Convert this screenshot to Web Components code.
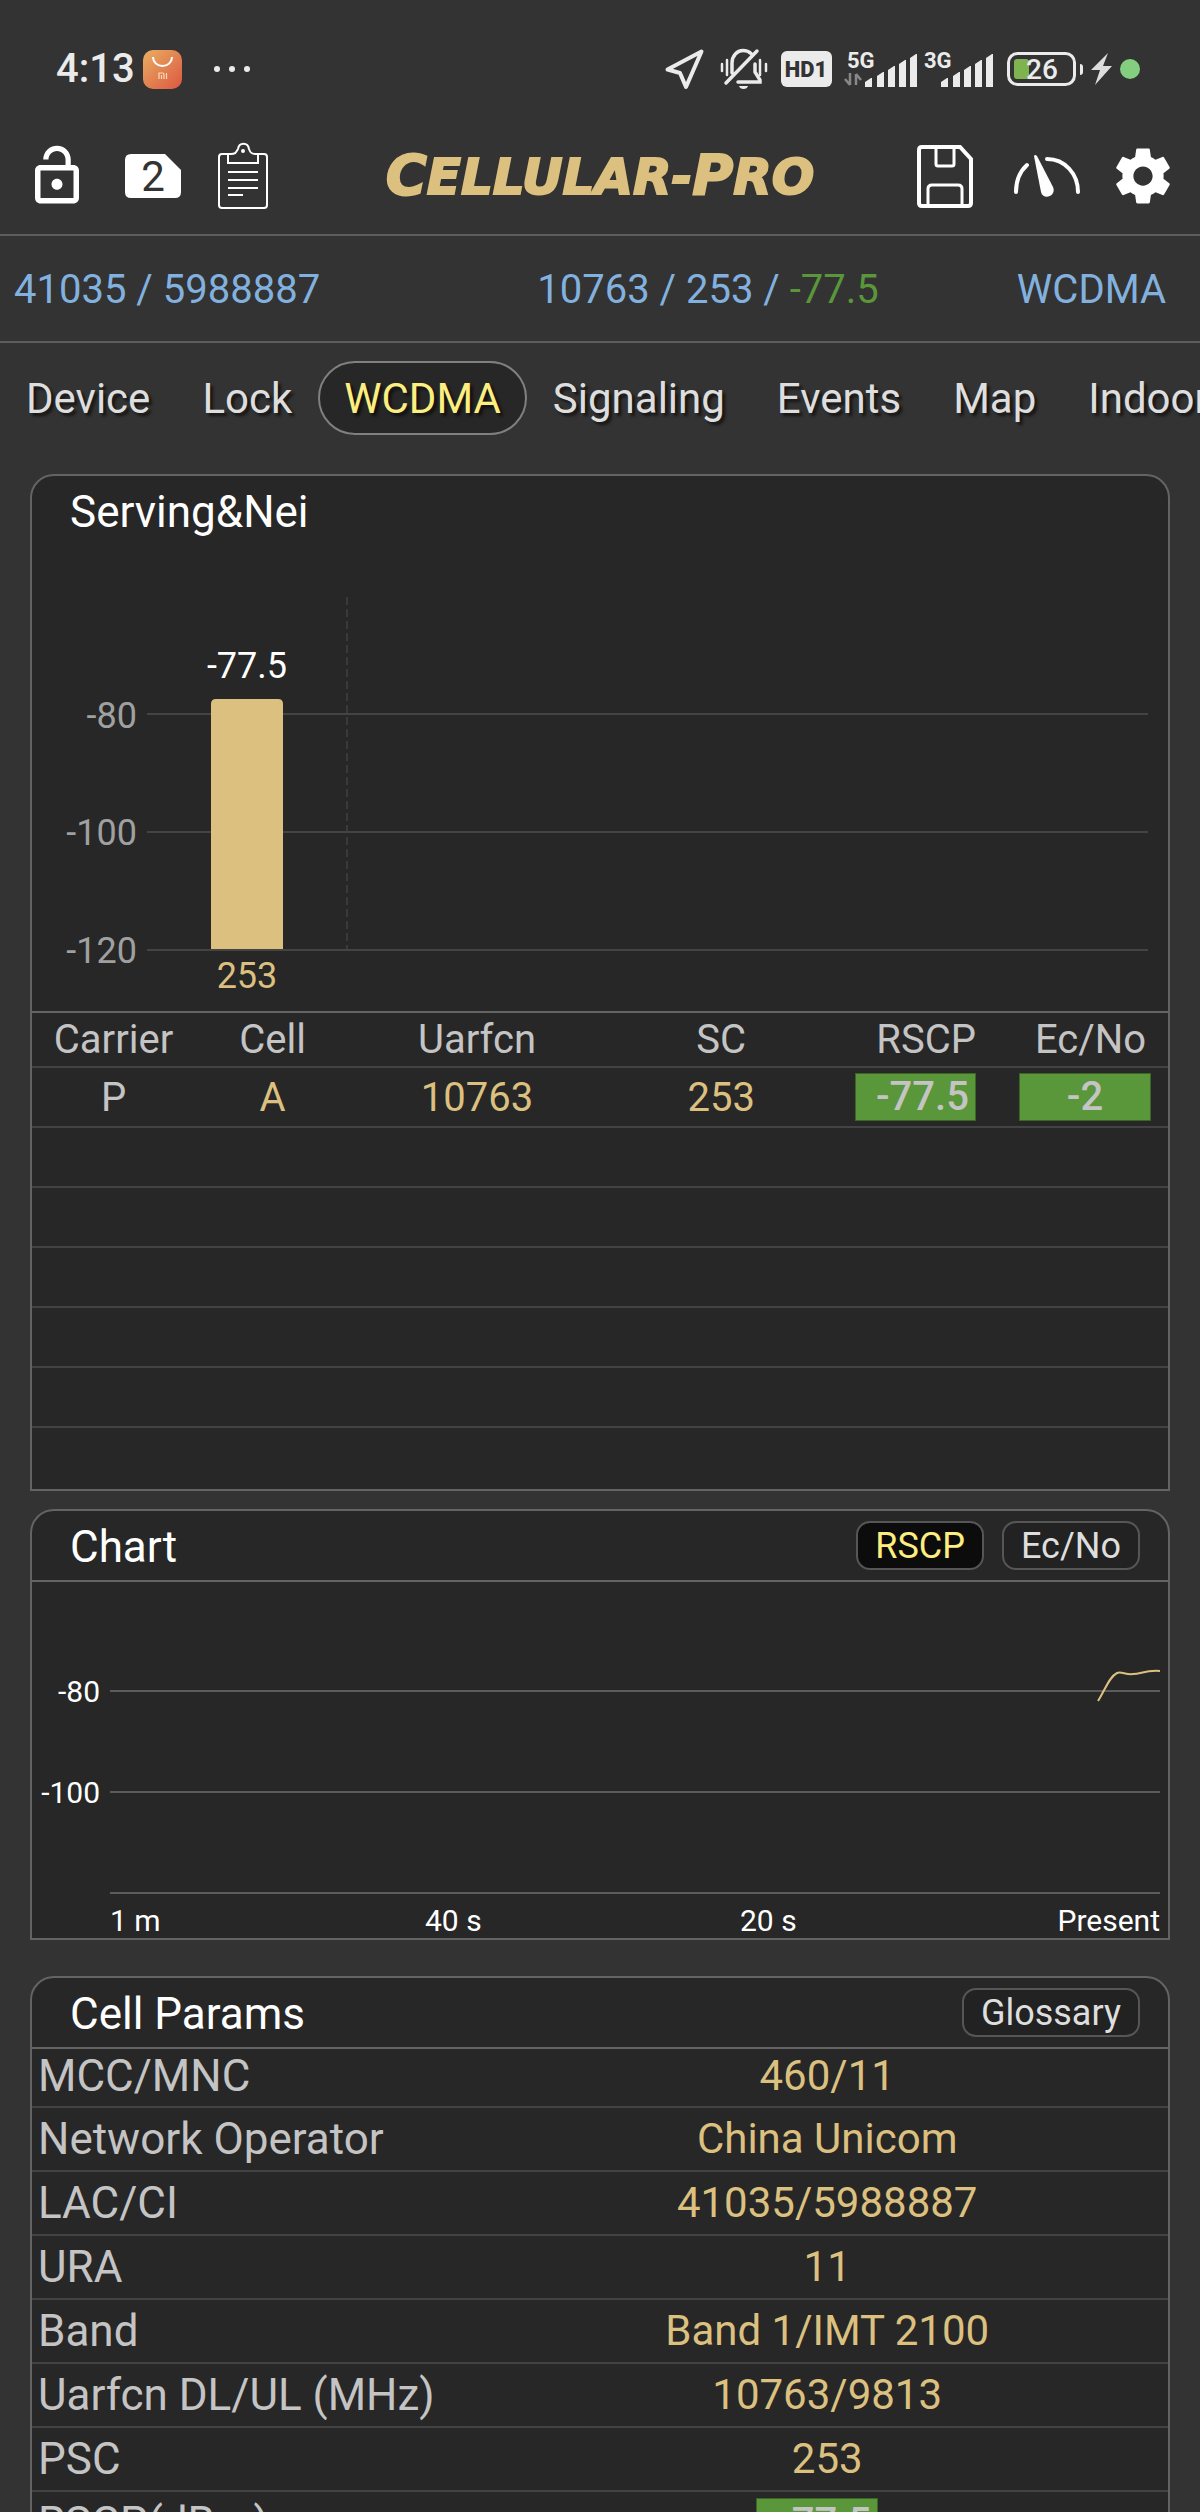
<!DOCTYPE html>
<html lang="en">
<head>
<meta charset="utf-8">
<meta name="viewport" content="width=device-width">
<title>Cellular-Pro</title>
<style>
:root{--bg:#333;--panel:#272727;--edge:#646464;--rule:#434343;--gold:#dcc07f;--blue:#82b1df;--green:#5a963a;--grey:#c4c4c4;--yellow:#fdee7f;--text:#dedede}
html,body{margin:0;height:100%;background:var(--bg)}
body{font-family:Roboto,"Liberation Sans",sans-serif;color:var(--text)}
</style>
</head>
<body>
<cell-app></cell-app>
<script>
class View extends HTMLElement{
  connectedCallback(){
    if(!this.shadowRoot)this.attachShadow({mode:'open'}).innerHTML='<style>*{box-sizing:border-box}button{font:inherit;color:inherit;background:none;border:0;padding:0;margin:0}svg{display:block;overflow:visible}'+this.css()+'</style>'+this.html();
  }
}

customElements.define('status-bar',class extends View{
  css(){return `:host{display:flex;justify-content:space-between;align-items:center;height:118px;padding:20px 60px 0 56px;color:#ebebeb}
    div{display:flex;align-items:center;gap:8px}
    time{font-size:40px;font-weight:500;line-height:48px}
    text{font-family:Roboto,sans-serif;fill:#ebebeb}`}
  bars(){return [[0,26],[12,20],[23,14],[34,8],[45,2]].map(([x,y])=>`<path d="M${x+21} 35V${y+4}l6-4h1V35z"/>`).join('')}
  html(){return `
  <div><time>4:13</time>
    <svg width="39" height="39" viewBox="0 0 39 39" role="img" aria-label="Mi Store"><defs><linearGradient id="g" x1="0" y1="0" x2="1" y2="1"><stop offset="0" stop-color="#e9af62"/><stop offset="1" stop-color="#db5741"/></linearGradient></defs><rect width="39" height="39" rx="10" fill="url(#g)"/><path d="M10 7c0 5 4 9 9.500 9s9.500-4 9.500-9" fill="none" stroke="#fff" stroke-width="2"/><path d="M16 29v-6h3.500q1.500 0 1.500 1.500V29M18.500 25v4M23.500 23v6" fill="none" stroke="#fbd9b5" stroke-width="1.200"/></svg>
    <svg width="66" height="38" viewBox="0 0 66 38" fill="#ebebeb" aria-hidden="true"><circle cx="27" cy="19" r="3"/><circle cx="42" cy="19" r="3"/><circle cx="57" cy="19" r="3"/></svg>
  </div>
  <div>
    <svg width="47" height="40" viewBox="0 0 47 40" aria-hidden="true"><path d="M36.500 2.500 2.500 20.500 15 24l6 14z" fill="none" stroke="#ebebeb" stroke-width="4" stroke-linejoin="round"/></svg>
    <svg width="53" height="40" viewBox="0 0 53 40" fill="none" stroke="#ebebeb" stroke-width="3" stroke-linecap="round" aria-hidden="true"><path d="M12 24V14C12 7 17 1.500 23 1.500q5 0 8 3M35 15v8l5 8v2H18M6 34 37 2" stroke-width="3.500"/><path d="M7 11v15M2 15v7M40 11v15M46 15v7" stroke-width="2.500"/><path d="M19 37h9q-1 3-4.500 3T19 37z" fill="#ebebeb" stroke="none"/></svg>
    <svg width="55" height="36" viewBox="0 0 55 36" aria-label="HD1"><rect width="51" height="36" rx="6" fill="#ebebeb"/><text x="25" y="26" text-anchor="middle" font-size="22" font-weight="900" style="fill:#333">HD1</text></svg>
    <svg width="72" height="35" viewBox="0 0 72 35" fill="#ebebeb"><text x="3" y="16" font-size="22" font-weight="700">5G</text><path d="M6 21v12M6 33l-5-6M12 33V22M12 22l5 6" stroke="#888" stroke-width="2.500" fill="none"/>${this.bars()}</svg>
    <svg width="75" height="35" viewBox="0 0 75 35" fill="#ebebeb"><text x="0" y="16" font-size="22" font-weight="700">3G</text><g transform="translate(-4)">${this.bars()}</g></svg>
    <svg width="76" height="34" viewBox="0 0 76 34"><rect x="1.500" y="1.500" width="66" height="31" rx="9" fill="none" stroke="#ebebeb" stroke-width="3"/><path d="M73 12q3 0 3 3v5q0 3-3 3z" fill="#ebebeb"/><rect x="7" y="7" width="15" height="20" rx="3" fill="#7fb350"/><text x="35" y="27" text-anchor="middle" font-size="28" font-weight="500">26</text></svg>
    <svg width="21" height="32" viewBox="0 0 21 32" fill="#ddd" aria-hidden="true"><path d="M17 0 0 17h9L4 32 21 13h-9z"/></svg>
    <svg width="20" height="20" viewBox="0 0 20 20" aria-hidden="true"><circle cx="10" cy="10" r="10" fill="#84cf7f"/></svg>
  </div>`}
});

customElements.define('tool-bar',class extends View{
  css(){return `:host{display:grid;grid-template-columns:1fr auto 1fr;align-items:center;height:118px;padding:0 24px;border-bottom:2px solid #5c5e5e}
    div{display:flex;gap:27px}.r{justify-content:flex-end;gap:33px}
    h1{margin:0;color:var(--gold);font:italic 700 50px/56px "DejaVu Sans",sans-serif;text-transform:uppercase;-webkit-text-stroke:2px var(--gold)}
    h1 span{font-size:56px}`}
  html(){return `
  <div>
    <button aria-label="Unlock"><svg width="66" height="66" viewBox="0 0 24 24" fill="#fff"><path d="M12 17c1.100 0 2-.9 2-2s-.9-2-2-2-2 .9-2 2 .9 2 2 2zm6-9h-1V6c0-2.760-2.240-5-5-5S7 3.240 7 6h1.900c0-1.710 1.390-3.100 3.100-3.100 1.710 0 3.100 1.390 3.100 3.100v2H6c-1.100 0-2 .9-2 2v10c0 1.100.9 2 2 2h12c1.100 0 2-.9 2-2V10c0-1.100-.9-2-2-2zm0 12H6V10h12v10z"/></svg></button>
    <button aria-label="SIM"><svg width="66" height="66" viewBox="0 0 66 66"><path d="M14 11h34l16 16v22q0 6-6 6H14q-6 0-6-6V17q0-6 6-6z" fill="#fff"/><text x="36" y="48" text-anchor="middle" font-size="42" font-family="Roboto,sans-serif" fill="#333">2</text></svg></button>
    <button aria-label="Clipboard"><svg width="66" height="66" viewBox="0 0 66 66" fill="none" stroke="#fff" stroke-width="2"><path d="M18 11h-6q-3 0-3 3v48q0 3 3 3h42q3 0 3-3V14q0-3-3-3h-6"/><path d="M18 20v-9h3c5 0 5-2 7-5 1-7 10-7 11 0 1 3 2 5 6 5h3v9z"/><circle cx="33" cy="8" r="1"/><path d="M18 29h30M18 37h30M18 45h30M18 52h15"/></svg></button>
  </div>
  <h1><span>C</span>ellular-<span>P</span>ro</h1>
  <div class="r">
    <button aria-label="Save"><svg width="66" height="66" viewBox="0 0 66 66" fill="none" stroke="#fff" stroke-width="4"><path d="M10 4h38l11 12v44q0 3-3 3H10q-3 0-3-3V7q0-3 3-3z"/><path d="M24 4v17q0 2 2 2h14q2 0 2-2V4M16 63V46q0-4 4-4h26q4 0 4 4v17" stroke-width="3"/></svg></button>
    <button aria-label="Gauge"><svg width="66" height="66" viewBox="0 0 66 66"><path d="M5 49q0-17 11-27M36 16c18 0 31 15 31 33" fill="none" stroke="#fff" stroke-width="4" stroke-linecap="round"/><path d="M23 13q1-2 3 0l16 31c4 9-10 14-12 5z" fill="#fff"/></svg></button>
    <button aria-label="Settings"><svg width="66" height="66" viewBox="0 0 24 24" fill="#fff"><path d="M19.430 12.980c.04-.32.07-.64.07-.98s-.03-.66-.07-.98l2.110-1.650c.19-.15.24-.42.12-.64l-2-3.460c-.12-.22-.39-.3-.61-.22l-2.490 1c-.52-.4-1.080-.73-1.690-.98l-.38-2.650C14.460 2.180 14.250 2 14 2h-4c-.25 0-.46.18-.49.42l-.38 2.650c-.61.25-1.170.59-1.690.98l-2.490-1c-.23-.09-.49 0-.61.22l-2 3.460c-.13.22-.07.49.12.64l2.110 1.650c-.04.32-.07.65-.07.98s.03.66.07.98l-2.110 1.650c-.19.15-.24.42-.12.64l2 3.460c.12.22.39.3.61.22l2.490-1c.52.4 1.080.73 1.690.98l.38 2.650c.03.24.24.42.49.42h4c.25 0 .46-.18.49-.42l.38-2.650c.61-.25 1.170-.59 1.690-.98l2.490 1c.23.09.49 0 .61-.22l2-3.460c.12-.22.07-.49-.12-.64l-2.110-1.650zM12 15.500c-1.930 0-3.500-1.570-3.500-3.500s1.570-3.500 3.500-3.500 3.500 1.570 3.500 3.500-1.570 3.500-3.500 3.500z"/></svg></button>
  </div>`}
});

customElements.define('cell-strip',class extends View{
  css(){return `:host{display:grid;grid-template-columns:39fr 40fr 21fr;align-items:center;height:107px;padding-top:2px;border-bottom:2px solid #5c5e5e;box-sizing:border-box;color:var(--blue);font-size:40px;line-height:48px;white-space:nowrap}
    .a{padding-left:14px}.b{text-align:center}.c{text-align:right;padding-right:34px}b{font-weight:400;color:var(--green)}`}
  html(){return `<span class="a">41035 / 5988887</span><span class="b">10763 / 253 / <b>-77.5</b></span><span class="c">WCDMA</span>`}
});

customElements.define('tab-bar',class extends View{
  css(){return `:host{display:block;overflow:hidden;padding:18px 0 39px}
    nav{display:flex;width:max-content;font-size:42px}
    button{height:74px;padding:2px 24px 0;border:2px solid transparent;border-radius:37px;line-height:48px;text-shadow:3px 3px 3px rgba(0,0,0,.6)}
    button[aria-selected=true]{background:var(--panel);border-color:#808080;color:var(--yellow)}`}
  html(){return `<nav role="tablist">${['Device','Lock','WCDMA','Signaling','Events','Map','Indoor'].map(t=>`<button role="tab" aria-selected="${t=='WCDMA'}">${t}</button>`).join('')}</nav>`}
});

customElements.define('info-panel',class extends View{
  css(){return `:host{display:block;background:var(--panel);border:2px solid var(--edge);border-radius:24px 24px 0 0}
    header{display:flex;align-items:center;justify-content:space-between;height:71px;padding:0 28px 0 38px;border-bottom:2px solid var(--edge)}
    :host([plain]) header{height:72px;border-color:transparent}
    h2{margin:0;padding-top:2px;color:#fff;font-size:44px;line-height:48px;font-weight:400}
    div{display:flex;gap:18px}`}
  html(){return `<header><h2><slot name="title"></slot></h2><div><slot name="actions"></slot></div></header><slot></slot>`}
});

customElements.define('pill-button',class extends View{
  css(){return `:host{display:block}button{height:49px;padding:0 17px;border:2px solid #565656;border-radius:14px;background:#222;font-size:36px;line-height:40px;color:var(--text)}
    :host([on]) button{background:#0c0c0c;color:var(--yellow)}`}
  html(){return `<button aria-pressed="${this.hasAttribute('on')}"><slot></slot></button>`}
});

customElements.define('bar-chart',class extends View{
  css(){return `:host{display:flex;font-size:36px;padding-right:20px}.p{flex:1}`}
  html(){return `<svg width="115" height="463" fill="#a0a0a0" text-anchor="end"><text x="105" y="180">-80</text><text x="105" y="297">-100</text><text x="105" y="415">-120</text></svg>
  <svg class="p" width="100%" height="463" text-anchor="middle"><path d="M200 49v353" stroke="#3a3a3a" stroke-width="2" stroke-dasharray="8 4"/><g stroke="#444" stroke-width="2"><line x2="100%" y1="166" y2="166"/><line x2="100%" y1="284" y2="284"/><line x2="100%" y1="402" y2="402"/></g>
  <path d="M64 401V156q0-5 5-5h62q5 0 5 5V401z" fill="#dcc07f"/><text x="100" y="130" fill="#fff">-77.5</text><text x="100" y="440" fill="#dcc07f">253</text></svg>`}
});

customElements.define('neighbor-table',class extends View{
  css(){return `:host{display:block;border-top:2px solid var(--edge)}
    table{width:100%;table-layout:fixed;border-collapse:separate;border-spacing:0;font-size:40px;line-height:48px;color:var(--grey);text-align:center}
    th,td{height:60px;padding:0 0 0 4px;font-weight:400;border-bottom:2px solid var(--rule)}
    td{padding-top:2px}
    th{height:55px}tr:last-child td{height:61px;border:0}
    .g{color:var(--gold)}
    .r{text-align:right;padding:0 33px 0 16px}.e{padding:0 17px 0 10px}
    span{display:block;background:var(--green);border:1px solid #3c6526;font-weight:500;line-height:46px}.r span{padding-right:6px}`}
  html(){return `<table><colgroup><col style="width:14%"><col style="width:14%"><col style="width:22%"><col style="width:21%"><col style="width:15%"><col style="width:14%"></colgroup>
  <thead><tr><th>Carrier</th><th>Cell</th><th>Uarfcn</th><th>SC</th><th class="r">RSCP</th><th>Ec/No</th></tr></thead>
  <tbody><tr><td>P</td><td class="g">A</td><td class="g">10763</td><td class="g">253</td><td class="r"><span>-77.5</span></td><td class="e"><span>-2</span></td></tr>${'<tr><td></td><td></td><td></td><td></td><td></td><td></td></tr>'.repeat(6)}</tbody></table>`}
});

customElements.define('line-chart',class extends View{
  css(){return `:host{display:grid;grid-template-columns:78px 1fr;padding-right:8px;font-size:30px;color:#fff}
    .x{grid-column:2;display:grid;grid-template-columns:3fr 3fr 3fr 1fr;line-height:34px;white-space:nowrap}.x :last-child{justify-self:end}`}
  html(){return `<svg width="78" height="322" fill="#fff" text-anchor="end"><text x="68" y="120">-80</text><text x="68" y="221">-100</text></svg>
  <svg width="100%" height="322"><g stroke="#5c5c5c" stroke-width="2"><line x2="100%" y1="109" y2="109"/><line x2="100%" y1="210" y2="210"/><line x2="100%" y1="311" y2="311"/></g>
  <svg x="100%" overflow="visible"><path d="M-62 119C-55 108-51 95-43 91-39 89-34 93-27 92-19 92-15 88 0 89" fill="none" stroke="#dcc07f" stroke-width="2"/></svg></svg>
  <div class="x"><span>1 m</span><span>40 s</span><span>20 s</span><span>Present</span></div>`}
});

customElements.define('param-table',class extends View{
  css(){return `:host{display:block}
    table{width:100%;table-layout:fixed;border-collapse:separate;border-spacing:0;font-size:42px;line-height:48px}
    th,td{height:64px;padding:0;border-bottom:2px solid var(--rule);font-weight:400}
    tr:first-child>*{height:59px;padding-bottom:4px}
    th{width:40%;padding-left:6px;text-align:left;color:var(--grey);font-size:44px}td{text-align:center;color:var(--gold)}
    span{display:block;width:122px;margin:0 auto;padding-right:6px;border:1px solid #3c6526;background:var(--green);color:var(--grey);font-size:40px;font-weight:500;text-align:right}
    .v{padding-right:20px}`}
  html(){return `<table>${[['MCC/MNC','460/11'],['Network Operator','China Unicom'],['LAC/CI','41035/5988887'],['URA','11'],['Band','Band 1/IMT 2100'],['Uarfcn DL/UL (MHz)','10763/9813'],['PSC','253']].map(([k,v])=>`<tr><th scope="row">${k}</th><td>${v}</td></tr>`).join('')}<tr><th scope="row">RSCP(dBm)</th><td class="v"><span>-77.5</span></td></tr></table>`}
});

customElements.define('cell-app',class extends View{
  css(){return `:host{display:flex;flex-direction:column;height:100vh;overflow:hidden}
    main{flex:1;min-height:0;overflow:hidden;padding:0 30px}
    info-panel+info-panel{margin-top:18px}info-panel:last-child{margin-top:36px}`}
  html(){return `<status-bar></status-bar><tool-bar></tool-bar><cell-strip></cell-strip><tab-bar></tab-bar>
  <main>
    <info-panel plain><span slot="title">Serving&amp;Nei</span><bar-chart></bar-chart><neighbor-table></neighbor-table></info-panel>
    <info-panel><span slot="title">Chart</span><pill-button slot="actions" on>RSCP</pill-button><pill-button slot="actions">Ec/No</pill-button><line-chart></line-chart></info-panel>
    <info-panel><span slot="title">Cell Params</span><pill-button slot="actions">Glossary</pill-button><param-table></param-table></info-panel>
  </main>`}
});
</script>
</body>
</html>
